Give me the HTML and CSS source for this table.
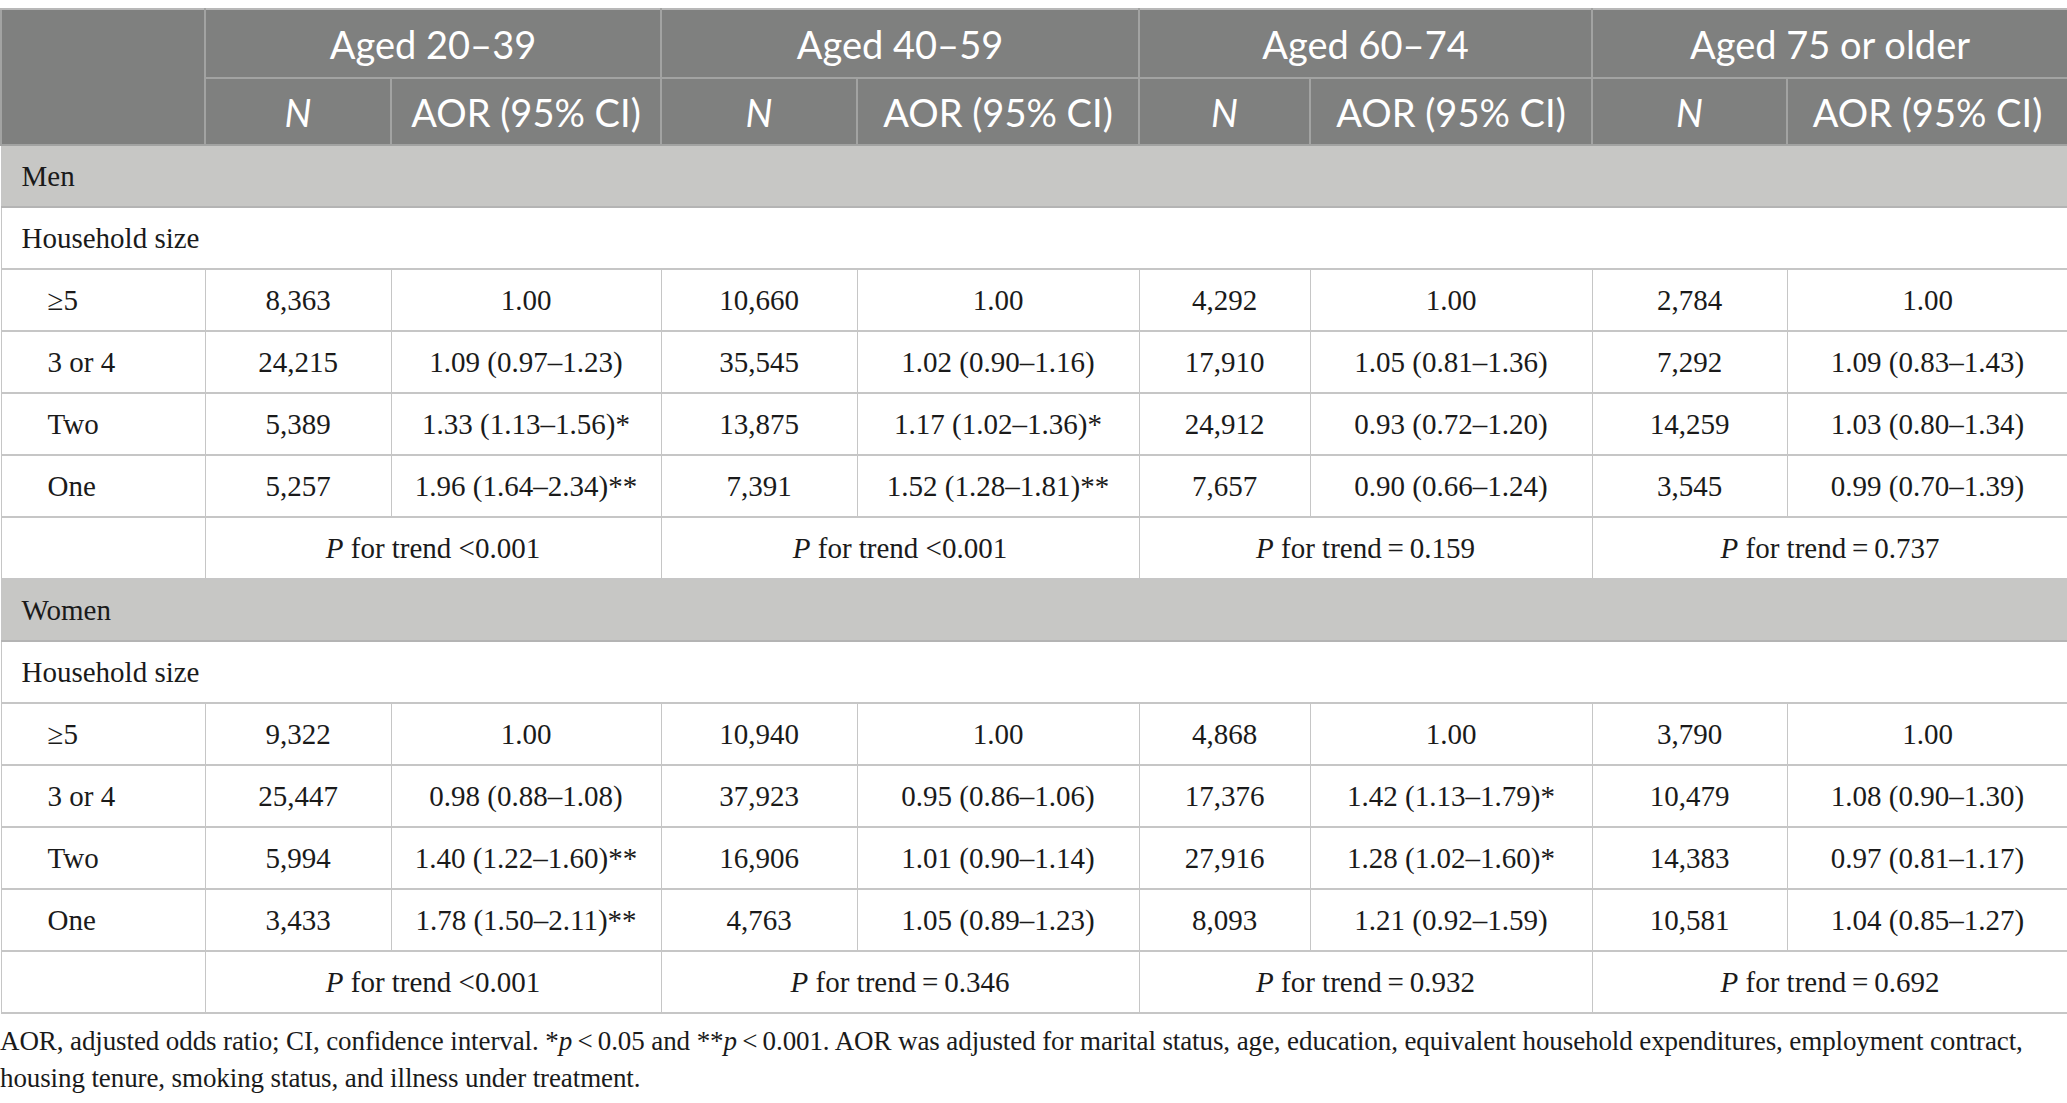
FILE: index.html
```html
<!DOCTYPE html>
<html lang="en">
<head>
    <meta charset="UTF-8">
    <meta name="viewport" content="width=device-width, initial-scale=1.0">
    <title>Household size and AOR by age group</title>
    <link rel="stylesheet" href="styles.css">
</head>
<body>

<table class="results">
    <colgroup>
        <col style="width: 204px">
        <col style="width: 186px">
        <col style="width: 270px">
        <col style="width: 196px">
        <col style="width: 282px">
        <col style="width: 171px">
        <col style="width: 282px">
        <col style="width: 195px">
        <col style="width: 281px">
    </colgroup>
    <thead>
        <tr class="head-top">
            <th rowspan="2"></th>
            <th colspan="2">Aged 20&ndash;39</th>
            <th colspan="2">Aged 40&ndash;59</th>
            <th colspan="2">Aged 60&ndash;74</th>
            <th colspan="2">Aged 75 or older</th>
        </tr>
        <tr class="head-sub">
            <th><i>N</i></th>
            <th>AOR (95% CI)</th>
            <th><i>N</i></th>
            <th>AOR (95% CI)</th>
            <th><i>N</i></th>
            <th>AOR (95% CI)</th>
            <th><i>N</i></th>
            <th>AOR (95% CI)</th>
        </tr>
    </thead>
    <tbody>
        <tr class="section"><td colspan="9">Men</td></tr>
        <tr class="group"><td colspan="9">Household size</td></tr>
        <tr>
            <td class="label">&ge;5</td>
            <td>8,363</td><td>1.00</td>
            <td>10,660</td><td>1.00</td>
            <td>4,292</td><td>1.00</td>
            <td>2,784</td><td>1.00</td>
        </tr>
        <tr>
            <td class="label">3 or 4</td>
            <td>24,215</td><td>1.09 (0.97&ndash;1.23)</td>
            <td>35,545</td><td>1.02 (0.90&ndash;1.16)</td>
            <td>17,910</td><td>1.05 (0.81&ndash;1.36)</td>
            <td>7,292</td><td>1.09 (0.83&ndash;1.43)</td>
        </tr>
        <tr>
            <td class="label">Two</td>
            <td>5,389</td><td>1.33 (1.13&ndash;1.56)*</td>
            <td>13,875</td><td>1.17 (1.02&ndash;1.36)*</td>
            <td>24,912</td><td>0.93 (0.72&ndash;1.20)</td>
            <td>14,259</td><td>1.03 (0.80&ndash;1.34)</td>
        </tr>
        <tr>
            <td class="label">One</td>
            <td>5,257</td><td>1.96 (1.64&ndash;2.34)**</td>
            <td>7,391</td><td>1.52 (1.28&ndash;1.81)**</td>
            <td>7,657</td><td>0.90 (0.66&ndash;1.24)</td>
            <td>3,545</td><td>0.99 (0.70&ndash;1.39)</td>
        </tr>
        <tr>
            <td class="label"></td>
            <td colspan="2"><i>P</i> for trend &lt;0.001</td>
            <td colspan="2"><i>P</i> for trend &lt;0.001</td>
            <td colspan="2"><i>P</i> for trend&thinsp;=&thinsp;0.159</td>
            <td colspan="2"><i>P</i> for trend&thinsp;=&thinsp;0.737</td>
        </tr>

        <tr class="section"><td colspan="9">Women</td></tr>
        <tr class="group"><td colspan="9">Household size</td></tr>
        <tr>
            <td class="label">&ge;5</td>
            <td>9,322</td><td>1.00</td>
            <td>10,940</td><td>1.00</td>
            <td>4,868</td><td>1.00</td>
            <td>3,790</td><td>1.00</td>
        </tr>
        <tr>
            <td class="label">3 or 4</td>
            <td>25,447</td><td>0.98 (0.88&ndash;1.08)</td>
            <td>37,923</td><td>0.95 (0.86&ndash;1.06)</td>
            <td>17,376</td><td>1.42 (1.13&ndash;1.79)*</td>
            <td>10,479</td><td>1.08 (0.90&ndash;1.30)</td>
        </tr>
        <tr>
            <td class="label">Two</td>
            <td>5,994</td><td>1.40 (1.22&ndash;1.60)**</td>
            <td>16,906</td><td>1.01 (0.90&ndash;1.14)</td>
            <td>27,916</td><td>1.28 (1.02&ndash;1.60)*</td>
            <td>14,383</td><td>0.97 (0.81&ndash;1.17)</td>
        </tr>
        <tr>
            <td class="label">One</td>
            <td>3,433</td><td>1.78 (1.50&ndash;2.11)**</td>
            <td>4,763</td><td>1.05 (0.89&ndash;1.23)</td>
            <td>8,093</td><td>1.21 (0.92&ndash;1.59)</td>
            <td>10,581</td><td>1.04 (0.85&ndash;1.27)</td>
        </tr>
        <tr>
            <td class="label"></td>
            <td colspan="2"><i>P</i> for trend &lt;0.001</td>
            <td colspan="2"><i>P</i> for trend&thinsp;=&thinsp;0.346</td>
            <td colspan="2"><i>P</i> for trend&thinsp;=&thinsp;0.932</td>
            <td colspan="2"><i>P</i> for trend&thinsp;=&thinsp;0.692</td>
        </tr>
    </tbody>
</table>

<p class="note">
    AOR, adjusted odds ratio; CI, confidence interval. *<i>p</i>&thinsp;&lt;&thinsp;0.05 and **<i>p</i>&thinsp;&lt;&thinsp;0.001. AOR was adjusted for marital status, age, education, equivalent household expenditures, employment contract,<br>
    housing tenure, smoking status, and illness under treatment.
</p>

</body>
</html>
```

FILE: styles.css
```css
body {
    margin: 0;
    background: #fff;
    color: #1a1a1a;
    font-family: "Liberation Serif", "Times New Roman", serif;
}
.results {
    width: 2067px;
    margin-top: 8px;
    border-collapse: collapse;
    table-layout: fixed;
    font-size: 29px;
}
.results th {
    background-color: #7f807f;
    color: #fff;
    font-family: Lato, "Open Sans", sans-serif;
    font-weight: 400;
    font-size: 38px;
    padding: 0;
    border: 2px solid #a2a3a2;
    text-align: center;
}
.results thead tr.head-top th {
    border-top: 2px solid #b8b8b8;
}
.head-top {
    height: 69px;
}
.head-sub {
    height: 67px;
}
.results tbody tr {
    height: 62px;
}
.results td {
    padding: 0;
    text-align: center;
    vertical-align: middle;
    border-left: 1px solid #c6c6c6;
    border-right: 1px solid #c6c6c6;
    border-bottom: 2px solid #c6c6c6;
}
.results td.label {
    text-align: left;
    padding-left: 46px;
}
.results tr.section td,
.results tr.group td {
    text-align: left;
    padding-left: 20px;
}
.results tr.section td {
    background-color: #c7c7c5;
    border-bottom-color: #b4b4b4;
}
.note {
    margin: 9px 0 0;
    font-size: 27px;
    letter-spacing: -0.1px;
    line-height: 37px;
}
```
